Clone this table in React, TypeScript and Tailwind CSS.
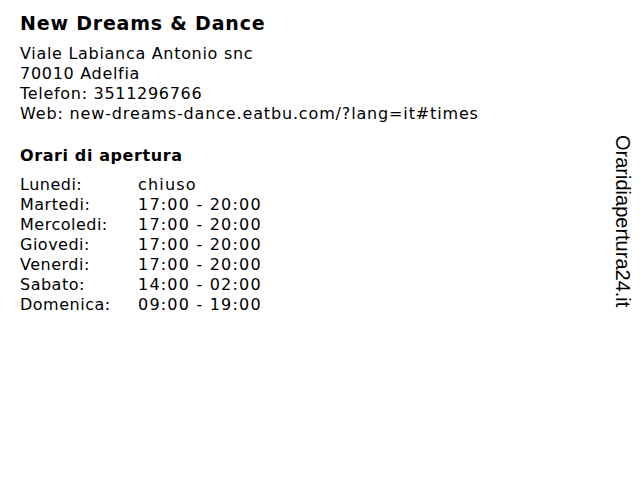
const hours = [
  ["Lunedi:", "chiuso"],
  ["Martedi:", "17:00 - 20:00"],
  ["Mercoledi:", "17:00 - 20:00"],
  ["Giovedi:", "17:00 - 20:00"],
  ["Venerdi:", "17:00 - 20:00"],
  ["Sabato:", "14:00 - 02:00"],
  ["Domenica:", "09:00 - 19:00"],
];

export default function App() {
  return (
    <div className="relative w-[640px] h-[480px] bg-white text-black font-['DejaVu_Sans',sans-serif]">
      <div className="px-5 pt-[11px]">
        <h1 className="text-[19px] leading-6 font-bold tracking-[0.8px]">New Dreams &amp; Dance</h1>
        <div className="mt-[9px] text-base leading-5 tracking-[0.7px]">
          <p>Viale Labianca Antonio snc</p>
          <p>70010 Adelfia</p>
          <p>Telefon: 3511296766</p>
          <p className="tracking-[0.85px]">Web: new-dreams-dance.eatbu.com/?lang=it#times</p>
        </div>
        <h2 className="mt-[22px] text-base leading-5 font-bold tracking-[0.6px]">Orari di apertura</h2>
        <table className="mt-[9px] text-base leading-5">
          <tbody>
            {hours.map(([day, time]) => (
              <tr key={day}>
                <td className="w-[118px] p-0 tracking-[0.5px]">{day}</td>
                <td className="p-0 tracking-[1.2px]">{time}</td>
              </tr>
            ))}
          </tbody>
        </table>
      </div>
      <div className="absolute left-[612px] top-[135px] [writing-mode:vertical-rl] text-[20px] leading-[22px] font-['Liberation_Sans',sans-serif]">
        Oraridiapertura24.it
      </div>
    </div>
  );
}
